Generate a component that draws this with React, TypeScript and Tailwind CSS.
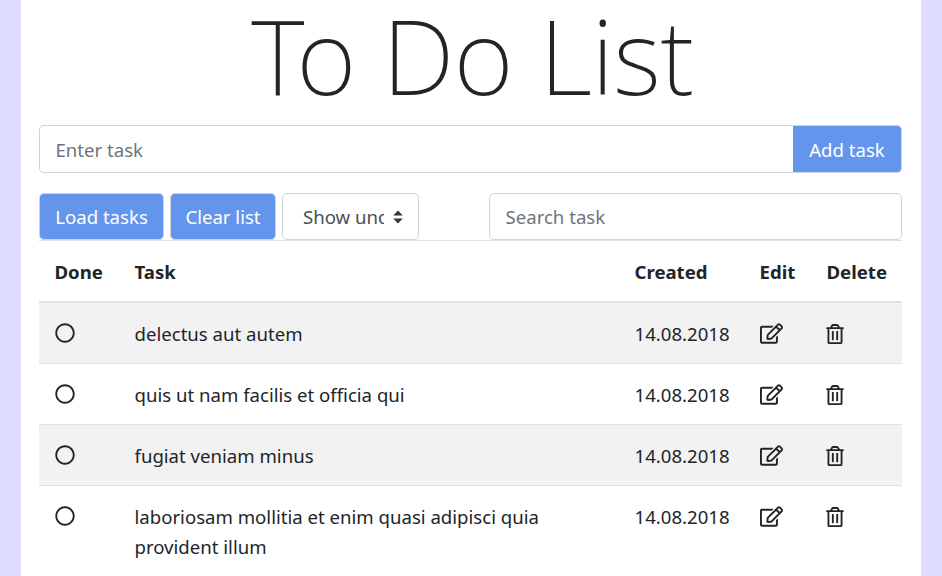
import React from "react";
import { FaRegCircle, FaRegEdit, FaRegTrashAlt } from "react-icons/fa";

const rows = [
  "delectus aut autem",
  "quis ut nam facilis et officia qui",
  "fugiat veniam minus",
  "laboriosam mollitia et enim quasi adipisci quia provident illum",
];

export default function App() {
  return (
    <div className="h-[576px] overflow-hidden bg-[#ddddff] px-[21px] font-['Noto_Sans','Open_Sans',sans-serif] text-[18.6px] leading-[30px] text-[#212529]">
      <div className="h-full bg-white pl-[18px] pr-[19px]">
        <h1 className="h-[125px] pl-[4px] text-center text-[103px] leading-[110px] font-[250] tracking-[-0.5px] whitespace-nowrap">To Do List</h1>
        <div className="flex h-[48px]">
          <input
            placeholder="Enter task"
            className="min-w-0 flex-1 rounded-l-[5px] border border-r-0 border-[#ced4da] pt-[1px] pl-[15.5px] pr-4 text-[18.6px] outline-none placeholder:text-[#6c757d]"
          />
          <button className="w-[109px] rounded-r-[5px] border border-l-0 border-[#ced4da] bg-[#6495ed] pt-[1px] text-white">Add task</button>
        </div>
        <div className="mt-[20px] flex h-[47px] items-stretch">
          <button className="w-[125px] rounded-[5px] border border-[#ced4da] bg-[#6495ed] text-white">Load tasks</button>
          <button className="ml-[6px] w-[106px] rounded-[5px] border border-[#ced4da] bg-[#6495ed] text-white">Clear list</button>
          <div className="relative ml-[6px] flex w-[137px] items-center rounded-[5px] border border-[#ced4da] pl-[20px]">
            <span className="w-[81px] overflow-hidden whitespace-nowrap text-[#495057]">Show undone</span>
            <svg className="absolute right-[15px] top-[16px]" width="10" height="14" viewBox="0 0 10 14" fill="#343a40">
              <path d="M5 0.5 9.8 5.5H.2zM5 13.5.2 8.5H9.8z" />
            </svg>
          </div>
          <input
            placeholder="Search task"
            className="ml-[70px] min-w-0 flex-1 rounded-[5px] border border-[#ced4da] pl-[15.5px] pr-4 text-[18.6px] outline-none placeholder:text-[#6c757d]"
          />
        </div>
        <table className="w-full table-fixed border-collapse">
          <thead>
            <tr className="h-[61px] border-t border-b-2 border-t-[#dee2e6] border-b-[#dee2e6] text-left">
              <th className="w-[80px] pl-[15.5px] pt-[2px] font-bold">Done</th>
              <th className="w-[500px] pl-[15.5px] pt-[2px] font-bold">Task</th>
              <th className="w-[125px] pl-[15.5px] pt-[2px] font-bold">Created</th>
              <th className="w-[67px] pl-[15.5px] pt-[2px] font-bold">Edit</th>
              <th className="pl-[15.5px] pt-[2px] font-bold">Delete</th>
            </tr>
          </thead>
          <tbody>
            {rows.map((r, i) => (
              <tr key={r} className={`border-b border-[#dee2e6] align-top ${i % 2 === 0 ? "bg-[#f2f2f2]" : ""}`}>
                <td className="pl-[15.5px] pt-[15px] pb-[15px]">
                  <div className="flex h-[30px] items-center"><FaRegCircle size={20} /></div>
                </td>
                <td className="pl-[15.5px] pr-[28px] pt-[16px] pb-[14px]">{r}</td>
                <td className="pl-[15.5px] pt-[16px] pb-[14px]">14.08.2018</td>
                <td className="pl-[15.5px] pt-[16px] pb-[14px]">
                  <div className="flex h-[30px] items-center"><FaRegEdit size={23} /></div>
                </td>
                <td className="pl-[14px] pt-[16px] pb-[14px]">
                  <div className="flex h-[30px] items-center"><FaRegTrashAlt size={20} /></div>
                </td>
              </tr>
            ))}
          </tbody>
        </table>
      </div>
    </div>
  );
}
